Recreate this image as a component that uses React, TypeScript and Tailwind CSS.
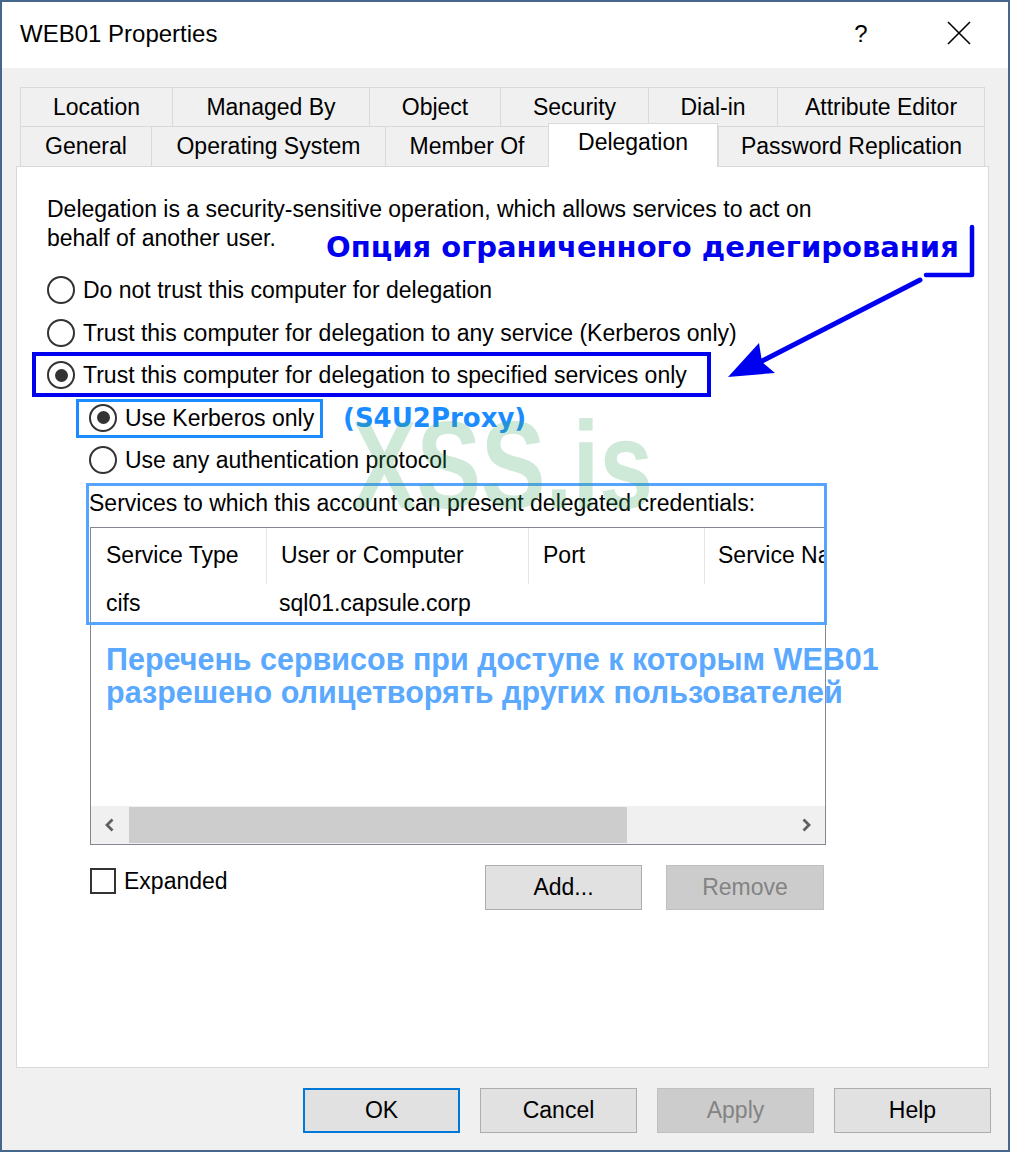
import React from "react";

function Radio({ checked }: { checked?: boolean }) {
  return (
    <span className="w-[28px] h-[28px] rounded-full border-2 border-[#333333] bg-white flex items-center justify-center shrink-0">
      {checked && <span className="w-[13px] h-[13px] rounded-full bg-[#333333]" />}
    </span>
  );
}

function RadioRow({ label, checked, indent }: { label: string; checked?: boolean; indent?: boolean }) {
  return (
    <div className={"h-[42.5px] flex items-center gap-[8px] " + (indent ? "pl-[42px]" : "")}>
      <Radio checked={checked} />
      <span className="whitespace-nowrap">{label}</span>
    </div>
  );
}

const row1 = [
  ["Location", 152],
  ["Managed By", 197],
  ["Object", 131],
  ["Security", 148],
  ["Dial-in", 129],
  ["Attribute Editor", 208],
] as const;

const row2 = [
  ["General", 131],
  ["Operating System", 234],
  ["Member Of", 163],
  ["Delegation", 170],
  ["Password Replication", 267],
] as const;

function Btn({ label, primary, disabled, w }: { label: string; primary?: boolean; disabled?: boolean; w: string }) {
  const base = "h-[45px] flex items-center justify-center text-[23px] ";
  const style = primary
    ? "border-2 border-[#0078d7] bg-[#e1e1e1] text-black"
    : disabled
    ? "border border-[#bfbfbf] bg-[#cccccc] text-[#838383]"
    : "border border-[#adadad] bg-[#e1e1e1] text-black";
  return <div className={base + style + " " + w}>{label}</div>;
}

function Chevron({ dir }: { dir: "l" | "r" }) {
  return (
    <svg width="12" height="16" viewBox="0 0 12 16">
      <path
        d={dir === "l" ? "M8.5 2.5 L3 8 L8.5 13.5" : "M3.5 2.5 L9 8 L3.5 13.5"}
        fill="none"
        stroke="#606060"
        strokeWidth="2.8"
      />
    </svg>
  );
}

export default function App() {
  return (
    <div className="relative w-[1010px] h-[1152px] font-['Liberation_Sans',Arial,sans-serif] text-[23px] text-black">
      <div className="w-full h-full border-2 border-[#46678a] bg-[#f0f0f0] flex flex-col">
        {/* Title bar */}
        <div className="h-[66px] bg-white flex items-center pl-[18px] shrink-0">
          <span className="text-[24px] mt-[-2px]">WEB01 Properties</span>
          <span className="ml-auto text-[24px] w-[30px] text-center mr-[70px] mt-[-2px]">?</span>
          <svg width="26" height="26" viewBox="0 0 26 26" className="mr-[36px] mt-[-4px]">
            <path d="M2 2 L24 24 M24 2 L2 24" stroke="#000" strokeWidth="1.6" />
          </svg>
        </div>

        {/* Body */}
        <div className="pl-[14px] pr-[19px] pt-[19px]">
          {/* Tabs */}
          <div className="pl-[4px] relative z-10">
            <div className="flex h-[39px]">
              {row1.map(([t, w], i) => (
                <div
                  key={t}
                  style={{ width: w }}
                  className={
                    "h-full border-t border-l border-[#d9d9d9] flex items-center justify-center " +
                    (i === row1.length - 1 ? "border-r" : "")
                  }
                >
                  {t}
                </div>
              ))}
            </div>
            <div className="flex h-[40px] items-end">
              {row2.map(([t, w], i) => {
                const sel = t === "Delegation";
                return (
                  <div
                    key={t}
                    style={{ width: w }}
                    className={
                      "border-t border-l border-[#d9d9d9] flex items-center justify-center " +
                      (sel
                        ? "h-[44px] bg-white border-r mb-[-1px] pb-[6px] "
                        : "h-[40px] ") +
                      (i === row2.length - 1 ? "border-r" : "")
                    }
                  >
                    {t}
                  </div>
                );
              })}
            </div>
          </div>

          {/* Panel */}
          <div className="h-[902px] border border-[#d9d9d9] bg-white pl-[30px] pt-[28px]">
            <div className="leading-[29px]">
              Delegation is a security-sensitive operation, which allows services to act on
              <br />
              behalf of another user.
            </div>
            <div className="mt-[16px]">
              <RadioRow label="Do not trust this computer for delegation" />
              <RadioRow label="Trust this computer for delegation to any service (Kerberos only)" />
              <RadioRow label="Trust this computer for delegation to specified services only" checked />
              <RadioRow label="Use Kerberos only" checked indent />
              <RadioRow label="Use any authentication protocol" indent />
            </div>
            <div className="pl-[42px] mt-[7px] leading-[29px]">
              Services to which this account can present delegated credentials:
            </div>
            <div className="ml-[43px] mt-[9px] w-[736px] h-[318px] border border-[#828790] bg-white flex flex-col overflow-hidden">
              <div className="h-[56px] flex shrink-0 whitespace-nowrap">
                <div className="w-[176px] h-full flex items-center pl-[15px] border-r border-[#e5e5e5]">Service Type</div>
                <div className="w-[262px] h-full flex items-center pl-[14px] border-r border-[#e5e5e5]">User or Computer</div>
                <div className="w-[176px] h-full flex items-center pl-[14px] border-r border-[#e5e5e5]">Port</div>
                <div className="flex-1 h-full flex items-center pl-[13px] overflow-hidden">Service Name</div>
              </div>
              <div className="h-[40px] flex items-center whitespace-nowrap shrink-0">
                <div className="w-[176px] pl-[15px]">cifs</div>
                <div className="pl-[12px]">sql01.capsule.corp</div>
              </div>
              <div className="flex-1" />
              <div className="h-[38px] bg-[#f0f0f0] flex items-center shrink-0">
                <div className="w-[38px] flex justify-center">
                  <Chevron dir="l" />
                </div>
                <div className="w-[498px] h-[36px] bg-[#cdcdcd]" />
                <div className="flex-1" />
                <div className="w-[38px] flex justify-center">
                  <Chevron dir="r" />
                </div>
              </div>
            </div>
            <div className="ml-[43px] mt-[20px] flex items-start">
              <div className="w-[395px] flex items-center gap-[8px] mt-[-1px]">
                <span className="w-[26px] h-[26px] border-2 border-[#333333] bg-white" />
                <span>Expanded</span>
              </div>
              <Btn label="Add..." w="w-[157px]" />
              <div className="ml-[24px]">
                <Btn label="Remove" disabled w="w-[158px]" />
              </div>
            </div>
          </div>
        </div>

        {/* Bottom buttons */}
        <div className="mt-[20px] flex justify-end gap-[20px] pr-[17px]">
          <Btn label="OK" primary w="w-[157px]" />
          <Btn label="Cancel" w="w-[157px]" />
          <Btn label="Apply" disabled w="w-[157px]" />
          <Btn label="Help" w="w-[157px]" />
        </div>
      </div>

      {/* Annotation overlay */}
      <svg className="absolute inset-0 pointer-events-none" width="1010" height="1152" viewBox="0 0 1010 1152">
        <rect x="34" y="354" width="675" height="41" fill="none" stroke="#0000f0" strokeWidth="4" />
        <rect x="77.5" y="400.5" width="244" height="36" fill="none" stroke="#1a8cff" strokeWidth="3" />
        <rect x="87.5" y="484.5" width="738" height="139" fill="none" stroke="#55a5ff" strokeWidth="3" />
        <polyline points="972,227 972,275 926,275" fill="none" stroke="#0000f0" strokeWidth="4.5" strokeLinecap="round" strokeLinejoin="round" />
        <line x1="920" y1="280" x2="762" y2="361" stroke="#0000f0" strokeWidth="5" strokeLinecap="round" />
        <polygon points="728,377 759,343 762,362 775,373" fill="#0000f0" />
      </svg>

      <div className="absolute left-[326px] top-[230px] leading-[34px] text-[29px] font-bold text-[#0000ee] whitespace-nowrap font-['DejaVu_Sans',Verdana,sans-serif]">
        Опция ограниченного делегирования
      </div>
      <div className="absolute left-[343px] top-[401px] leading-[34px] text-[26px] font-bold text-[#1a8cff] whitespace-nowrap font-['DejaVu_Sans',Verdana,sans-serif]">
        (S4U2Proxy)
      </div>
      <div className="absolute left-[106px] top-[643px] leading-[33px] text-[30.5px] font-bold text-[#5aa9ff] whitespace-nowrap">
        Перечень сервисов при доступе к которым WEB01
        <br />
        разрешено олицетворять других пользователей
      </div>
      <div className="absolute left-[352px] top-[395px] leading-[140px] text-[124px] font-bold text-[#3aa860]/25 whitespace-nowrap origin-left scale-x-[0.78] pointer-events-none">
        XSS.is
      </div>
    </div>
  );
}
